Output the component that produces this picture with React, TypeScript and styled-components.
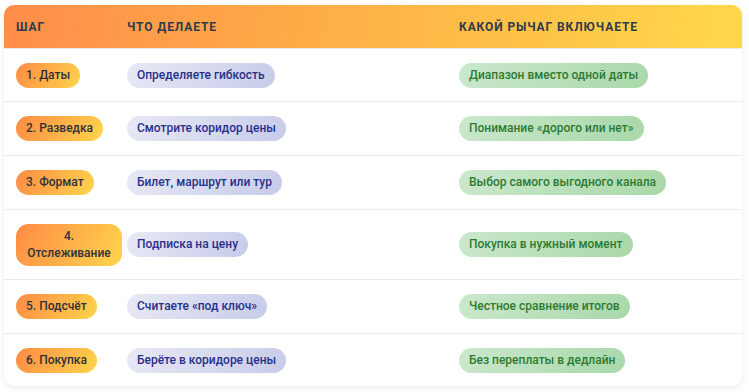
import React from "react";
import styled, { createGlobalStyle } from "styled-components";

const Global = createGlobalStyle`
  html, body { margin: 0; padding: 0; background: #ffffff; }
  body { font-family: Roboto, "Noto Sans", sans-serif; }
  * { box-sizing: border-box; }
`;

const Page = styled.div`
  padding: 5px 7px 6px 4px;
`;

const Card = styled.div`
  background: #ffffff;
  border-radius: 10px;
  overflow: hidden;
  box-shadow: 0 2px 6px rgba(0, 0, 0, 0.08);
`;

const Row = styled.div<{ $h: number }>`
  display: grid;
  grid-template-columns: 106px 327px 1fr;
  column-gap: 5px;
  padding: 0 12px;
  align-items: center;
  height: ${(p) => p.$h}px;
  border-top: 1px solid #ececec;
`;

const HeadRow = styled.div`
  display: grid;
  grid-template-columns: 106px 327px 1fr;
  column-gap: 5px;
  padding: 0 12px;
  align-items: center;
  height: 43px;
  background: linear-gradient(100deg, #ff8d4a 0%, #fdb347 50%, #ffd84a 100%);
`;

const HeadCell = styled.div`
  font-size: 12px;
  font-weight: 700;
  letter-spacing: 0.9px;
  color: #2f3b4c;
  text-transform: uppercase;
`;

const Cell = styled.div`
  display: flex;
  align-items: center;
`;

const Pill = styled.span<{ $kind: "step" | "action" | "lever" }>`
  display: inline-block;
  font-size: 12px;
  font-weight: 500;
  line-height: 17px;
  padding: 4px 10px;
  border-radius: 12.5px;
  text-align: center;
  background: ${(p) =>
    p.$kind === "step"
      ? "linear-gradient(120deg, #ff8b45 0%, #ffd54c 100%)"
      : p.$kind === "action"
      ? "linear-gradient(120deg, #e8e9f5 0%, #c7cbe9 100%)"
      : "linear-gradient(120deg, #cbe8cc 0%, #a8d8a9 100%)"};
  color: ${(p) =>
    p.$kind === "step" ? "#2f323a" : p.$kind === "action" ? "#28318c" : "#2e7a33"};
`;

const rows = [
  { step: "1. Даты", action: "Определяете гибкость", lever: "Диапазон вместо одной даты", h: 53 },
  { step: "2. Разведка", action: "Смотрите коридор цены", lever: "Понимание «дорого или нет»", h: 54 },
  { step: "3. Формат", action: "Билет, маршрут или тур", lever: "Выбор самого выгодного канала", h: 54 },
  { step: "4. Отслеживание", action: "Подписка на цену", lever: "Покупка в нужный момент", h: 70 },
  { step: "5. Подсчёт", action: "Считаете «под ключ»", lever: "Честное сравнение итогов", h: 54 },
  { step: "6. Покупка", action: "Берёте в коридоре цены", lever: "Без переплаты в дедлайн", h: 53 },
];

export default function App() {
  return (
    <>
      <Global />
      <Page>
        <Card>
          <HeadRow>
            <HeadCell>Шаг</HeadCell>
            <HeadCell>Что делаете</HeadCell>
            <HeadCell>Какой рычаг включаете</HeadCell>
          </HeadRow>
          {rows.map((r) => (
            <Row key={r.step} $h={r.h}>
              <Cell>
                <Pill $kind="step">{r.step}</Pill>
              </Cell>
              <Cell>
                <Pill $kind="action">{r.action}</Pill>
              </Cell>
              <Cell>
                <Pill $kind="lever">{r.lever}</Pill>
              </Cell>
            </Row>
          ))}
        </Card>
      </Page>
    </>
  );
}
